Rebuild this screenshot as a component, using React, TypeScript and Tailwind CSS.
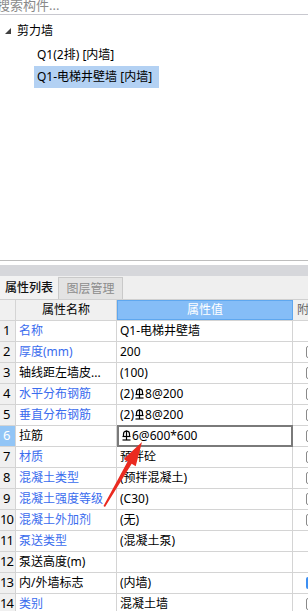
import React from "react";

const Rebar = () => (
  <svg width="9" height="12" viewBox="0 0 9 12" className="inline-block align-[-1px] mx-[1px]">
    <path d="M1.5 6.5 V4 Q1.5 1.2 4.5 1.2 Q7.5 1.2 7.5 4 V6.5" fill="none" stroke="#000" strokeWidth="1.2" />
    <line x1="4.5" y1="0.5" x2="4.5" y2="10" stroke="#000" strokeWidth="1.2" />
    <line x1="0.5" y1="6.5" x2="8.5" y2="6.5" stroke="#000" strokeWidth="1.2" />
    <line x1="0.5" y1="10" x2="8.5" y2="10" stroke="#000" strokeWidth="1.2" />
  </svg>
);

type Row = { name: string; blue: boolean; value: React.ReactNode; check: "none" | "box" | "on" };

const rows: Row[] = [
  { name: "名称", blue: true, value: "Q1-电梯井壁墙", check: "none" },
  { name: "厚度(mm)", blue: true, value: "200", check: "box" },
  { name: "轴线距左墙皮...", blue: false, value: "(100)", check: "box" },
  { name: "水平分布钢筋", blue: true, value: <>(2)<Rebar />8@200</>, check: "box" },
  { name: "垂直分布钢筋", blue: true, value: <>(2)<Rebar />8@200</>, check: "box" },
  { name: "拉筋", blue: false, value: <><Rebar />6@600*600</>, check: "box" },
  { name: "材质", blue: true, value: "预拌砼", check: "box" },
  { name: "混凝土类型", blue: true, value: "(预拌混凝土)", check: "box" },
  { name: "混凝土强度等级", blue: true, value: "(C30)", check: "box" },
  { name: "混凝土外加剂", blue: true, value: "(无)", check: "box" },
  { name: "泵送类型", blue: true, value: "(混凝土泵)", check: "none" },
  { name: "泵送高度(m)", blue: false, value: "", check: "none" },
  { name: "内/外墙标志", blue: false, value: "(内墙)", check: "on" },
  { name: "类别", blue: true, value: "混凝土墙", check: "box" },
];

export default function App() {
  return (
    <div
      className="relative w-[308px] h-[611px] overflow-hidden bg-white text-[12px] text-black"
      style={{ fontFamily: '"Noto Sans", "Noto Sans CJK SC", sans-serif' }}
    >
      {/* Search */}
      <div className="h-[15px] border-b border-[#c8c8cf] overflow-hidden">
        <div className="-mt-[4px] -ml-[3px] text-[13px] text-[#8a8a8a] leading-[18px]">搜索构件...</div>
      </div>
      {/* Tree */}
      <div className="h-[245px] pt-[5px]">
        <div className="h-[22px] flex items-center">
          <svg width="6" height="6" viewBox="0 0 6 6" className="ml-[5px] mr-[6px]">
            <polygon points="6,0 6,6 0,6" fill="#404040" />
          </svg>
          <span className="leading-[22px]">剪力墙</span>
        </div>
        <div className="mt-[2px] h-[22px] flex items-center pl-[37px] leading-[22px]">Q1(2排) [内墙]</div>
        <div className="h-[22px] ml-[34px] w-[125px] bg-[#b3d1f3] flex items-center pl-[3px] leading-[22px] whitespace-nowrap">
          Q1-电梯井壁墙 [内墙]
        </div>
      </div>
      {/* Bottom panel */}
      <div className="border-t border-[#bdbdbd]">
        <div className="h-[4px] bg-white" />
        <div className="h-[11px] bg-[#d6d7db]" />
        <div className="h-[24px] bg-[#efefef] flex border-b border-[#d0d0d0]">
          <div className="w-[58px] flex items-center justify-center font-medium text-[#111] bg-[#f2f2f2]">属性列表</div>
          <div className="w-[65px] flex items-center justify-center text-[#8c8c8c] bg-[#e3e3e3] border border-b-0 border-[#c9c9c9] mt-[1px]">
            图层管理
          </div>
        </div>
        {/* Header */}
        <div className="flex h-[21px] bg-[#f0f0f0] border-b border-[#d4d4d4]">
          <div className="w-[16px] border-r border-[#d4d4d4]" />
          <div className="w-[101px] border-r border-[#d4d4d4] flex items-center justify-center">属性名称</div>
          <div className="w-[176px] bg-[#85bdf7] border border-[#5ea7ef] flex items-center justify-center text-white">属性值</div>
          <div className="flex-1 flex items-center pl-[4px] text-[#666] overflow-hidden whitespace-nowrap">附</div>
        </div>
        {rows.map((r, i) => {
          const sel = i === 5;
          return (
            <div key={i} className="flex h-[21px] border-b border-[#d4d4d4]">
              <div
                className={`w-[16px] shrink-0 border-r border-[#d4d4d4] flex items-center text-[13px] ${
                  sel ? "bg-[#92c5f6] text-white" : "bg-[#f0f0f0]"
                } ${i >= 9 ? "tracking-[-1px] pl-[0px]" : "pl-[3px]"}`}
              >
                {i + 1}
              </div>
              <div
                className={`w-[101px] shrink-0 border-r border-[#d4d4d4] flex items-center pl-[3px] whitespace-nowrap overflow-hidden ${
                  r.blue ? "text-[#3a6cee]" : "text-black"
                }`}
              >
                {r.name}
              </div>
              <div
                className={`w-[176px] shrink-0 flex items-center whitespace-nowrap overflow-hidden ${
                  sel ? "border-2 border-[#7a7a7a] pl-[2px] -mt-[1px] h-[22px]" : "border-r border-[#d4d4d4] pl-[3px]"
                }`}
              >
                {r.value}
              </div>
              <div className="flex-1 flex items-center overflow-hidden">
                {r.check === "box" && (
                  <div className="ml-[13px] w-[12px] h-[12px] shrink-0 rounded-[2px] border border-[#8a8a8a] bg-white" />
                )}
                {r.check === "on" && (
                  <div className="ml-[13px] w-[12px] h-[12px] shrink-0 rounded-[2px] bg-[#3d8ff2]" />
                )}
              </div>
            </div>
          );
        })}
      </div>
      {/* Red arrow */}
      <svg className="absolute left-0 top-0 pointer-events-none" width="308" height="611">
        <polygon
          points="103.5,506 127.6,461.4 123.7,459 142,442 135.7,466.2 131.7,463.8 105,507"
          fill="#ea2a20"
        />
      </svg>
    </div>
  );
}
